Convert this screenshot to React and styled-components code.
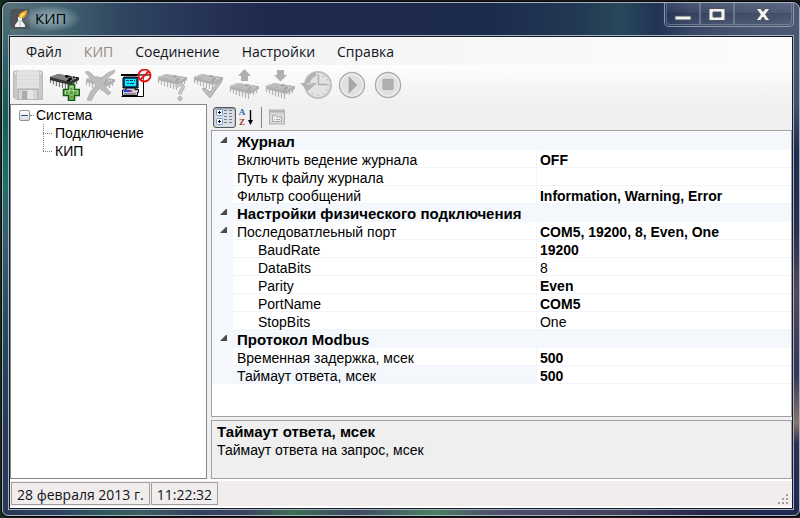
import React, { useState } from "react";
import styled, { createGlobalStyle, css } from "styled-components";

const GlobalStyle = createGlobalStyle`
  *, *::before, *::after { box-sizing: border-box; }
  html, body, #root { height: 100%; }
  body { margin: 0; background: #17181b; }
  button { font: inherit; color: inherit; border: 0; padding: 0; background: none; }
  ul { list-style: none; margin: 0; padding: 0; }
`;

const uiFont = `"Open Sans", "Noto Sans", sans-serif`;
const gridFont = `"Liberation Sans", Arial, sans-serif`;

const Desktop = styled.div`
  min-height: 100%;
  display: flex;
  padding: 2px 0 2px 2px;
  background: linear-gradient(90deg, #12301f 0, #0d1416 20px, #17181b 50%, #1c1718);
`;

const Window = styled.main`
  flex: 1;
  min-width: 0;
  display: flex;
  flex-direction: column;
  border: 1px solid #a9b3c0;
  border-radius: 7px 7px 6px 6px;
  padding: 0 5px 5px;
  box-shadow: 0 0 0 1px #05070b;
  background:
    linear-gradient(90deg, #2b3757, #2d4464 60px, #2f5a5c 100px, #3b5f60 140px, #33425c 190px, #3a4260 240px, #3c7050 290px, #3f4763 350px, #4a8060 430px, #50506c 490px, #43405c 620px, #25264a 700px, #1f2850) left bottom / 100% 6px no-repeat,
    linear-gradient(180deg, #527078 0, #2f6069 60px, #135e52 110px, #1d6f68 180px, #3b5c70 240px, #24495c 330px, #2b3757 430px, #2b3757) left top / 7px 100% no-repeat,
    linear-gradient(180deg, #4b5977 0, #44506e 100px, #1d2b50 150px, #2b3050 230px, #55495e 290px, #33345c 370px, #8a7468 420px, #2d2e55 440px, #1f2850) right top / 7px 100% no-repeat,
    linear-gradient(90deg, #58747b 0, #40606e 60px, #2f4560 120px, #29375a 180px, #1e2a4e 260px, #1c2a4c 480px, #213853 570px, #27485a 620px, #223355 655px, #3a4867 690px, #46536f 740px, #4c5977);
`;

const TitleBar = styled.header`
  display: flex;
  height: 32px;
  padding-left: 2px;
`;

const AppIcon = styled.span`
  width: 20px;
  height: 20px;
  margin-top: 6px;
  background: #4e5459;
  border-radius: 3px;
  svg { display: block; }
`;

const Title = styled.h1`
  margin: 2px 0 0 -10px;
  height: 27px;
  padding: 0 15px;
  font: 400 15px/27px ${uiFont};
  color: #000;
  background: radial-gradient(ellipse closest-side, #c4d6e0aa, #a8c0cc66 60%, #a8c0cc00);
`;

const Caption = styled.div`
  display: flex;
  margin-left: auto;
  height: 24px;
  border: solid #8d98ab;
  border-width: 0 1px 1px;
  border-radius: 0 0 5px 5px;
  padding: 0 1px 1px;
`;

const CaptionButton = styled.button`
  width: ${(p) => (p.$wide ? 58 : 34)}px;
  display: grid;
  place-items: center;
  border: solid #8d98ab88;
  border-width: 0 1px 1px;
  background: linear-gradient(#ffffff18, #ffffff04 45%, #00000018 50%, #ffffff08);
  &:first-child { border-bottom-left-radius: 4px; }
  &:last-child { border-bottom-right-radius: 4px; }
`;

const Client = styled.div`
  flex: 1;
  min-height: 0;
  display: flex;
  flex-direction: column;
  border: 1px solid #111c2b;
  outline: 1px solid #a9b3c0;
  margin: 1px;
  background: #f0f0f0;
`;

const MenuBar = styled.nav`
  display: flex;
  height: 28px;
  padding: 2px 0 0 7px;
  background: linear-gradient(90deg, #f0f0f0, #fcfcfc 780px);
  font: 14px/26px ${uiFont};
`;

const MenuButton = styled.button`
  padding: 0 9px;
  margin-right: 4px;
  color: ${(p) => (p.disabled ? "#948a80" : "#10141c")};
`;

const ToolStrip = styled.div`
  display: flex;
  height: 39px;
  background: linear-gradient(#fdfdfd, #f8f8f8 40%, #f0f0f0);
`;

const ToolButton = styled.button`
  width: 36px;
  display: grid;
  place-items: center;
  svg { display: block; }
`;

const Body = styled.div`
  flex: 1;
  min-height: 0;
  display: flex;
  gap: 4px;
`;

const TreePane = styled.section`
  flex: 0 0 197px;
  background: #fff;
  border: 1px solid #828790;
  padding: 1px 8px;
  font: 14px/18px ${gridFont};
  color: #000;
`;

const TreeRoot = styled.div`
  display: flex;
  align-items: center;
`;

const Toggle = styled.button`
  width: 11px;
  height: 11px;
  border: 1px solid #919191;
  border-radius: 2px;
  background: linear-gradient(#fff, #dcdcdc);
  display: grid;
  place-items: center;
  &::before { content: ""; width: 7px; height: 1px; background: #2b4a9b; }
`;

const Dots = styled.span`
  width: ${(p) => p.$width}px;
  border-top: 1px dotted #808080;
  margin-right: ${(p) => p.$after}px;
`;

const TreeBranch = styled.ul`
  margin-left: 24px;
`;

const TreeItem = styled.li`
  display: flex;
  align-items: center;
  background: repeating-linear-gradient(#808080 0 1px, transparent 1px 2px) left top / 1px 18px no-repeat;
  &:last-child { background-size: 1px 9px; }
`;

const Properties = styled.section`
  flex: 1;
  min-width: 0;
  display: flex;
  flex-direction: column;
  font: 14px/18px ${gridFont};
  color: #000;
`;

const GridTools = styled.div`
  display: flex;
  align-items: center;
  height: 26px;
  padding-left: 2px;
`;

const GridTool = styled.button`
  height: 21px;
  width: ${(p) => (p.$active ? 23 : 21)}px;
  display: grid;
  place-items: center;
  ${(p) => p.$active && css`
    border: 1px solid #54585e;
    border-radius: 3px;
    background: #dcdfe3;
    box-shadow: inset 0 1px 2px #8a8e94;
  `}
`;

const Separator = styled.span`
  width: 1px;
  height: 21px;
  background: #868686;
  margin: 0 4px;
`;

const GridFrame = styled.div`
  flex: 1;
  min-height: 0;
  border: 1px solid #a0a0a0;
  background: #fff;
  padding-top: 1px;
`;

const PropTable = styled.table`
  width: 100%;
  table-layout: fixed;
  border-collapse: separate;
  border-spacing: 0;
  td, th { height: 18px; padding: 0; text-align: left; white-space: nowrap; overflow: hidden; }
`;

const GutterCol = styled.col`width: 21px;`;
const NameCol = styled.col`width: 52.5%;`;

const Gutter = styled.td`
  background: #f4f7fc;
  vertical-align: top;
`;

const Expander = styled.button`
  display: block;
  margin: 5px 0 0 8px;
  width: 7px;
  height: 6px;
  background: linear-gradient(135deg, transparent 42%, #4a4a4a 50%);
`;

const CategoryCell = styled.th`
  && { padding: 2px 0 0 4px; }
  background: #f4f7fc;
  font-size: 15px;
  line-height: 16px;
  font-weight: 700;
`;

const NameCell = styled.th`
  && { padding: 2px 0 0 ${(p) => (p.$nested ? 25 : 4)}px; }
  line-height: 16px;
  font-weight: 400;
  box-shadow: inset -1px -1px #f1f4f9;
  background: ${(p) => (p.$selected ? "#f4f7fc" : "#fff")};
`;

const ValueCell = styled.td`
  && { padding: 2px 0 0 3px; }
  line-height: 16px;
  box-shadow: inset 0 -1px #f1f4f9;
  font-weight: ${(p) => (p.$plain ? 400 : 700)};
`;

const HelpPane = styled.section`
  height: 59px;
  margin-top: 3px;
  border: 1px solid #a0a0a0;
  background: #efefef;
  padding: 2px 5px;
`;

const HelpTitle = styled.h2`
  margin: 0;
  font: inherit;
  font-size: 15px;
  font-weight: 700;
`;

const HelpText = styled.p`margin: 0;`;

const StatusBar = styled.footer`
  display: flex;
  align-items: stretch;
  gap: 1px;
  height: 29px;
  border: solid #fff;
  border-width: 2px 0 2px 0;
  padding: 1px 1px 1px;
  background: #f1edec;
  font: 14px/23px ${uiFont};
  color: #10141c;
`;

const StatusCell = styled.span`
  border: 1px solid #a0a0a0;
  padding: 0 5px;
  line-height: 23px;
`;

const Grip = styled.svg`
  margin: auto 2px 0 auto;
  align-self: flex-end;
`;

/* ---- toolbar drawings, 32 x 32 ---- */

const Icon = ({ children, size = 32 }) => (
  <svg width={size} height={size} viewBox={`0 0 ${size} ${size}`} aria-hidden="true">{children}</svg>
);

const Chip = ({ dark, y = 1 }) => {
  const leg = dark ? "#7a7a7a" : "#b4b4b4";
  return (
    <g transform={`translate(0 ${y})`}>
      <path d="M2.500 9v4M5.500 10v4.500M8.500 11v5M11.500 12v5M14.500 13v5M17.500 14v5M20.500 14v6" stroke={leg} strokeWidth="1.300" />
      <path d="M3.500 9v4M6.500 10v4.500M9.500 11v5M12.500 12v5M15.500 13v5M18.500 14v5" stroke="#f2f2f2" strokeWidth=".8" />
      <path d="M25.500 11v5M28.500 9v5" stroke={leg} strokeWidth="1.300" />
      <path d="M2 7 10 4 31 7.500V10L22 15 2 10Z" fill={dark ? "#333" : "#b0b0b0"} />
      <path d="M2 7 10 4 31 7.500 22 12Z" fill={dark ? "#8c8c8c" : "#c4c4c4"} />
      <path d="M17 5 31 7.500 22 12 18 11 21 8.500 17 7Z" fill={dark ? "#080808" : "#a6a6a6"} />
      <path d="M20 7.500 25 6.500 24 8.500 28 8 22 11" stroke={dark ? "#b5b5b5" : "#d4d4d4"} strokeWidth=".8" fill="none" />
      <path d="M6 7 18 9.500M9 5.500 17 7" stroke={dark ? "#787878" : "#b2b2b2"} />
    </g>
  );
};

const SaveIcon = () => (
  <Icon>
    <path d="M2 2H29Q30.500 2 30.500 3.500V30.500H4L1.500 28V2.500Z" fill="#c8c8c8" stroke="#bababa" />
    <rect x="5" y="2" width="22" height="17" fill="#e2e2e2" />
    <path d="M6 6.500H26M6 10.500H26M6 14.500H26" stroke="#dadada" />
    <rect x="3" y="3" width="1" height="2" fill="#f2f2f2" /><rect x="28" y="3" width="1" height="2" fill="#f2f2f2" />
    <rect x="6.500" y="20.500" width="19" height="10" fill="#d6d6d6" stroke="#b4b4b4" />
    <rect x="10" y="22" width="5" height="8" fill="#acacac" /><rect x="16" y="21" width="5" height="9" fill="#e6e6e6" />
  </Icon>
);

const AddChipIcon = () => (
  <Icon>
    <Chip dark />
    <path d="M20.500 15.500H26.500V20.500H31.500V26.500H26.500V31.500H20.500V26.500H15.500V20.500H20.500Z" fill="#7cbf68" stroke="#145c10" strokeWidth="1.600" />
    <path d="M22 17.500H25V22H30M22 18V22H17.500V25" stroke="#b9ddb0" fill="none" />
    <path d="M23.500 19V29M18 23.500H29" stroke="#4c9a3c" strokeWidth="2" strokeDasharray="2 2" />
    <path d="M22 19h1v1h-1zM18 24h1v1h-1zM24 27h1v1h-1zM28 22h1v1h-1z" fill="#d2704a" />
  </Icon>
);

const DeleteChipIcon = () => (
  <Icon>
    <Chip y={3} />
    <path d="M1 3Q5 1 8 5L15 12Q22 3 31 1L30 4Q23 8 19 15L27 24 24 26 16 19Q10 25 7 32L3 31Q5 23 12 16Z" fill="#bdbdbd" stroke="#b2b2b2" strokeWidth=".8" />
  </Icon>
);

const ComputerIcon = () => (
  <Icon>
    <path d="M2 6H24V28H2Z" fill="#fff" />
    <path d="M1 6H31" stroke="#000" strokeWidth="2" />
    <path d="M23.500 7V27.500H1.500" stroke="#000" fill="none" />
    <path d="M4 8H17L18 9V19H3V9Z" fill="#0b4a78" stroke="#000" />
    <rect x="5" y="10" width="11" height="7" fill="#19e6f4" />
    <path d="M6 11.500H9M10 11.500H13M14 11.500H15M7 14.500H9M10 14.500H14" stroke="#0a3f78" />
    <path d="M6 19H15V20.500H18.500V23.500H17.500V26.500H2.500V21H6Z" fill="#c5c9d4" stroke="#000" />
    <rect x="4" y="21" width="6" height="2" fill="#2438e8" /><rect x="10" y="21" width="2" height="2" fill="#e33" />
    <path d="M4 25H16" stroke="#555" />
    <circle cx="24.500" cy="6.500" r="6" fill="#fff" fillOpacity=".4" stroke="#ec1212" strokeWidth="1.800" />
    <path d="M20.500 10.500 28.500 2.500" stroke="#ec1212" strokeWidth="1.800" />
  </Icon>
);

const QueryChipIcon = () => (
  <Icon>
    <Chip />
    <path d="M20.500 18Q22 14.500 25 15.500 28.500 17 26 20.500 24 22 24 25.500" fill="none" stroke="#b0b0b0" strokeWidth="3.600" />
    <path d="M20.500 18Q22 14.500 25 15.500 28.500 17 26 20.500 24 22 24 25.500" fill="none" stroke="#cdcdcd" strokeWidth="1.600" />
    <circle cx="24" cy="29.500" r="2" fill="#c2c2c2" stroke="#adadad" />
  </Icon>
);

const CheckChipIcon = () => (
  <Icon>
    <Chip />
    <path d="M10 20 13 19 18 23 28 11 30 12 18 29Z" fill="#bfbfbf" stroke="#a9a9a9" />
  </Icon>
);

const UploadChipIcon = () => (
  <Icon><Chip y={10} /><path d="M16.500 0 23 7H20V12H13V7H10Z" fill="#b0b0b0" /></Icon>
);

const DownloadChipIcon = () => (
  <Icon><Chip y={10} /><path d="M13 1H20V6H23L16.500 12.500 10 6H13Z" fill="#b0b0b0" /></Icon>
);

const ClockIcon = () => (
  <Icon>
    <circle cx="18" cy="16" r="13" fill="#e2e2e2" stroke="#c0c0c0" strokeWidth="2" />
    <g stroke="#b0b0b0">
      <path d="M18 5V7M18 25V27M27 16H29M12 6.500 13 8M24 6.500 23 8M12 25.500 13 24M24 25.500 23 24M27.500 10.500 26 11.500M27.500 21.500 26 20.500" />
      <path d="M18.500 6V15.500H27" fill="none" strokeWidth="1.400" />
    </g>
    <path d="M0 14H5Q7 6 16 3V7Q10 10 10 14L17 14 8 22Z" fill="#b2b2b2" />
    <path d="M6 15H13" fill="none" stroke="#c6c6c6" strokeWidth="2" />
  </Icon>
);

const RoundIcon = ({ children }) => (
  <Icon>
    <circle cx="16" cy="16" r="12.500" fill="#e0e0e0" stroke="#adadad" strokeWidth="1.500" />
    <circle cx="16" cy="16" r="11" fill="none" stroke="#efefef" strokeWidth="1.200" />
    {children}
  </Icon>
);

const PlayIcon = () => (
  <RoundIcon><path d="M13 8 21 16 13 24Z" fill="#a8a8a8" stroke="#9f9f9f" strokeWidth=".6" /></RoundIcon>
);
const StopIcon = () => (
  <RoundIcon><rect x="11" y="10.500" width="10" height="10" fill="#b0b0b0" stroke="#a2a2a2" strokeWidth=".8" /></RoundIcon>
);

const TorchIcon = () => (
  <Icon size={20}>
    <path d="M8 9 9 7Q8 4 17 1 17 7 13 9L11 10Z" fill="#f5a21a" />
    <path d="M10 8Q10 5 15 3 14 7 12 8Z" fill="#ffe25c" />
    <path d="M8 8 12 9V12L15 16V18H5V16L8 12Z" fill="#f2f2f2" />
    <path d="M8 12H12M10 13V17" stroke="#a9adb2" strokeWidth=".8" />
  </Icon>
);

const CategorizedIcon = () => (
  <svg width="19" height="18" viewBox="0 0 19 18" aria-hidden="true">
    <g fill="#fff" stroke="#6b9bd6"><rect x="1.500" y="1.500" width="6" height="6" rx="1" /><rect x="1.500" y="10.500" width="6" height="6" rx="1" /></g>
    <path d="M3 4.500H6M4.500 3V6M3 13.500H6M4.500 12V15" stroke="#000" />
    <path d="M9 2.500H12M14 2.500H17M9 5.500H12M14 5.500H17M9 8.500H12M14 8.500H17M9 11.500H12M14 11.500H17M9 14.500H12M14 14.500H17" stroke="#6c7f9e" />
  </svg>
);

const SortLetters = styled.span`
  display: grid;
  font: 700 9px/10px "Liberation Serif", serif;
  color: #3459ae;
  span + span { color: #a93434; }
`;

const SortFigure = styled.span`
  display: flex;
  align-items: center;
  gap: 2px;
  svg { display: block; }
`;

const SortIcon = () => (
  <SortFigure aria-hidden="true">
    <SortLetters><span>A</span><span>Z</span></SortLetters>
    <svg width="7" height="18" viewBox="0 0 7 18">
      <path d="M3.500 2V13" stroke="#000" strokeWidth="1.400" /><path d="M1 12H6L3.500 17Z" fill="#000" />
    </svg>
  </SortFigure>
);

const PagesIcon = () => (
  <svg width="16" height="16" viewBox="0 0 16 16" aria-hidden="true">
    <rect x=".5" y="1" width="15" height="14" fill="#d8d8d8" stroke="#b0b0b0" />
    <path d="M1 2.500H15" stroke="#b0b0b0" strokeWidth="2" />
    <path d="M3.500 12.500V6.500H7L8 8H12.500V12.500Z" fill="#eee" stroke="#aaa" />
    <path d="M5 10.500H6M7 10.500H11" stroke="#aaa" />
  </svg>
);

const MinimizeGlyph = () => (
  <svg width="18" height="20" viewBox="0 0 18 20" aria-hidden="true"><rect x="1" y="12" width="16" height="4" fill="#f3f3f3" stroke="#4d5361" /></svg>
);
const MaximizeGlyph = () => (
  <svg width="18" height="20" viewBox="0 0 18 20" aria-hidden="true"><path fillRule="evenodd" d="M1 4.500H17V16.500H1ZM5 8H13V13H5Z" fill="#f3f3f3" stroke="#4d5361" /></svg>
);
const CloseGlyph = () => (
  <svg width="16" height="20" viewBox="0 0 16 20" aria-hidden="true"><path d="M1 4.500H5.500L8 7.500 10.500 4.500H15L10.500 10.500 15 16.500H10.500L8 13 5.500 16.500H1L5.500 10.500Z" fill="#f3f3f3" stroke="#4d5361" /></svg>
);

const menus = ["Файл", "КИП", "Соединение", "Настройки", "Справка"];

const tools = [
  ["Сохранить", SaveIcon, true],
  ["Добавить КИП", AddChipIcon, false],
  ["Удалить КИП", DeleteChipIcon, true],
  ["Соединение", ComputerIcon, false],
  ["Опросить", QueryChipIcon, true],
  ["Проверить", CheckChipIcon, true],
  ["Считать", UploadChipIcon, true],
  ["Записать", DownloadChipIcon, true],
  ["Время", ClockIcon, true],
  ["Пуск", PlayIcon, true],
  ["Стоп", StopIcon, true],
];

const rows = [
  { category: "Журнал" },
  { name: "Включить ведение журнала", value: "OFF" },
  { name: "Путь к файлу журнала", value: "" },
  { name: "Фильтр сообщений", value: "Information, Warning, Error" },
  { category: "Настройки физического подключения" },
  { name: "Последоватлеьный порт", value: "COM5, 19200, 8, Even, One", expandable: true },
  { name: "BaudRate", value: "19200", nested: true },
  { name: "DataBits", value: "8", nested: true, plain: true },
  { name: "Parity", value: "Even", nested: true },
  { name: "PortName", value: "COM5", nested: true },
  { name: "StopBits", value: "One", nested: true, plain: true },
  { category: "Протокол Modbus" },
  { name: "Временная задержка, мсек", value: "500" },
  { name: "Таймаут ответа, мсек", value: "500" },
];

function PropertyRow({ row, selected, onSelect }) {
  const label = row.category || row.name;
  return (
    <tr onClick={onSelect}>
      <Gutter>{(row.category || row.expandable) && <Expander aria-label={label} aria-expanded="true" />}</Gutter>
      {row.category ? (
        <CategoryCell colSpan={2}>{row.category}</CategoryCell>
      ) : (
        <>
          <NameCell scope="row" $nested={row.nested} $selected={selected}>{row.name}</NameCell>
          <ValueCell $plain={row.plain}>{row.value}</ValueCell>
        </>
      )}
    </tr>
  );
}

export default function App() {
  const [selected, setSelected] = useState(rows.length - 1);
  return (
    <>
      <GlobalStyle />
      <Desktop>
        <Window>
          <TitleBar>
            <AppIcon><TorchIcon /></AppIcon>
            <Title>КИП</Title>
            <Caption>
              <CaptionButton aria-label="Свернуть"><MinimizeGlyph /></CaptionButton>
              <CaptionButton aria-label="Развернуть"><MaximizeGlyph /></CaptionButton>
              <CaptionButton $wide aria-label="Закрыть"><CloseGlyph /></CaptionButton>
            </Caption>
          </TitleBar>
          <Client>
            <MenuBar>
              {menus.map((m) => <MenuButton key={m} disabled={m === "КИП"}>{m}</MenuButton>)}
            </MenuBar>
            <ToolStrip role="toolbar">
              {tools.map(([label, Glyph, off]) => (
                <ToolButton key={label} aria-label={label} disabled={off}><Glyph /></ToolButton>
              ))}
            </ToolStrip>
            <Body>
              <TreePane>
                <TreeRoot><Toggle aria-label="Система" aria-expanded="true" /><Dots $width={4} $after={2} />Система</TreeRoot>
                <TreeBranch>
                  <TreeItem><Dots $width={9} $after={3} />Подключение</TreeItem>
                  <TreeItem><Dots $width={9} $after={3} />КИП</TreeItem>
                </TreeBranch>
              </TreePane>
              <Properties>
                <GridTools role="toolbar">
                  <GridTool $active aria-label="По категориям" aria-pressed="true"><CategorizedIcon /></GridTool>
                  <GridTool aria-label="По алфавиту"><SortIcon /></GridTool>
                  <Separator />
                  <GridTool aria-label="Страницы свойств" disabled><PagesIcon /></GridTool>
                </GridTools>
                <GridFrame>
                  <PropTable>
                    <colgroup><GutterCol /><NameCol /><col /></colgroup>
                    <tbody>
                      {rows.map((row, i) => (
                        <PropertyRow key={i} row={row} selected={i === selected} onSelect={() => setSelected(i)} />
                      ))}
                    </tbody>
                  </PropTable>
                </GridFrame>
                <HelpPane>
                  <HelpTitle>Таймаут ответа, мсек</HelpTitle>
                  <HelpText>Таймаут ответа на запрос, мсек</HelpText>
                </HelpPane>
              </Properties>
            </Body>
            <StatusBar>
              <StatusCell>28 февраля 2013 г.</StatusCell>
              <StatusCell>11:22:32</StatusCell>
              <Grip width="11" height="11" viewBox="0 0 11 11" aria-hidden="true">
                <path d="M8 0h2v2h-2zM4 4h2v2h-2zM8 4h2v2h-2zM0 8h2v2h-2zM4 8h2v2h-2zM8 8h2v2h-2z" fill="#a0a0a0" />
              </Grip>
            </StatusBar>
          </Client>
        </Window>
      </Desktop>
    </>
  );
}
